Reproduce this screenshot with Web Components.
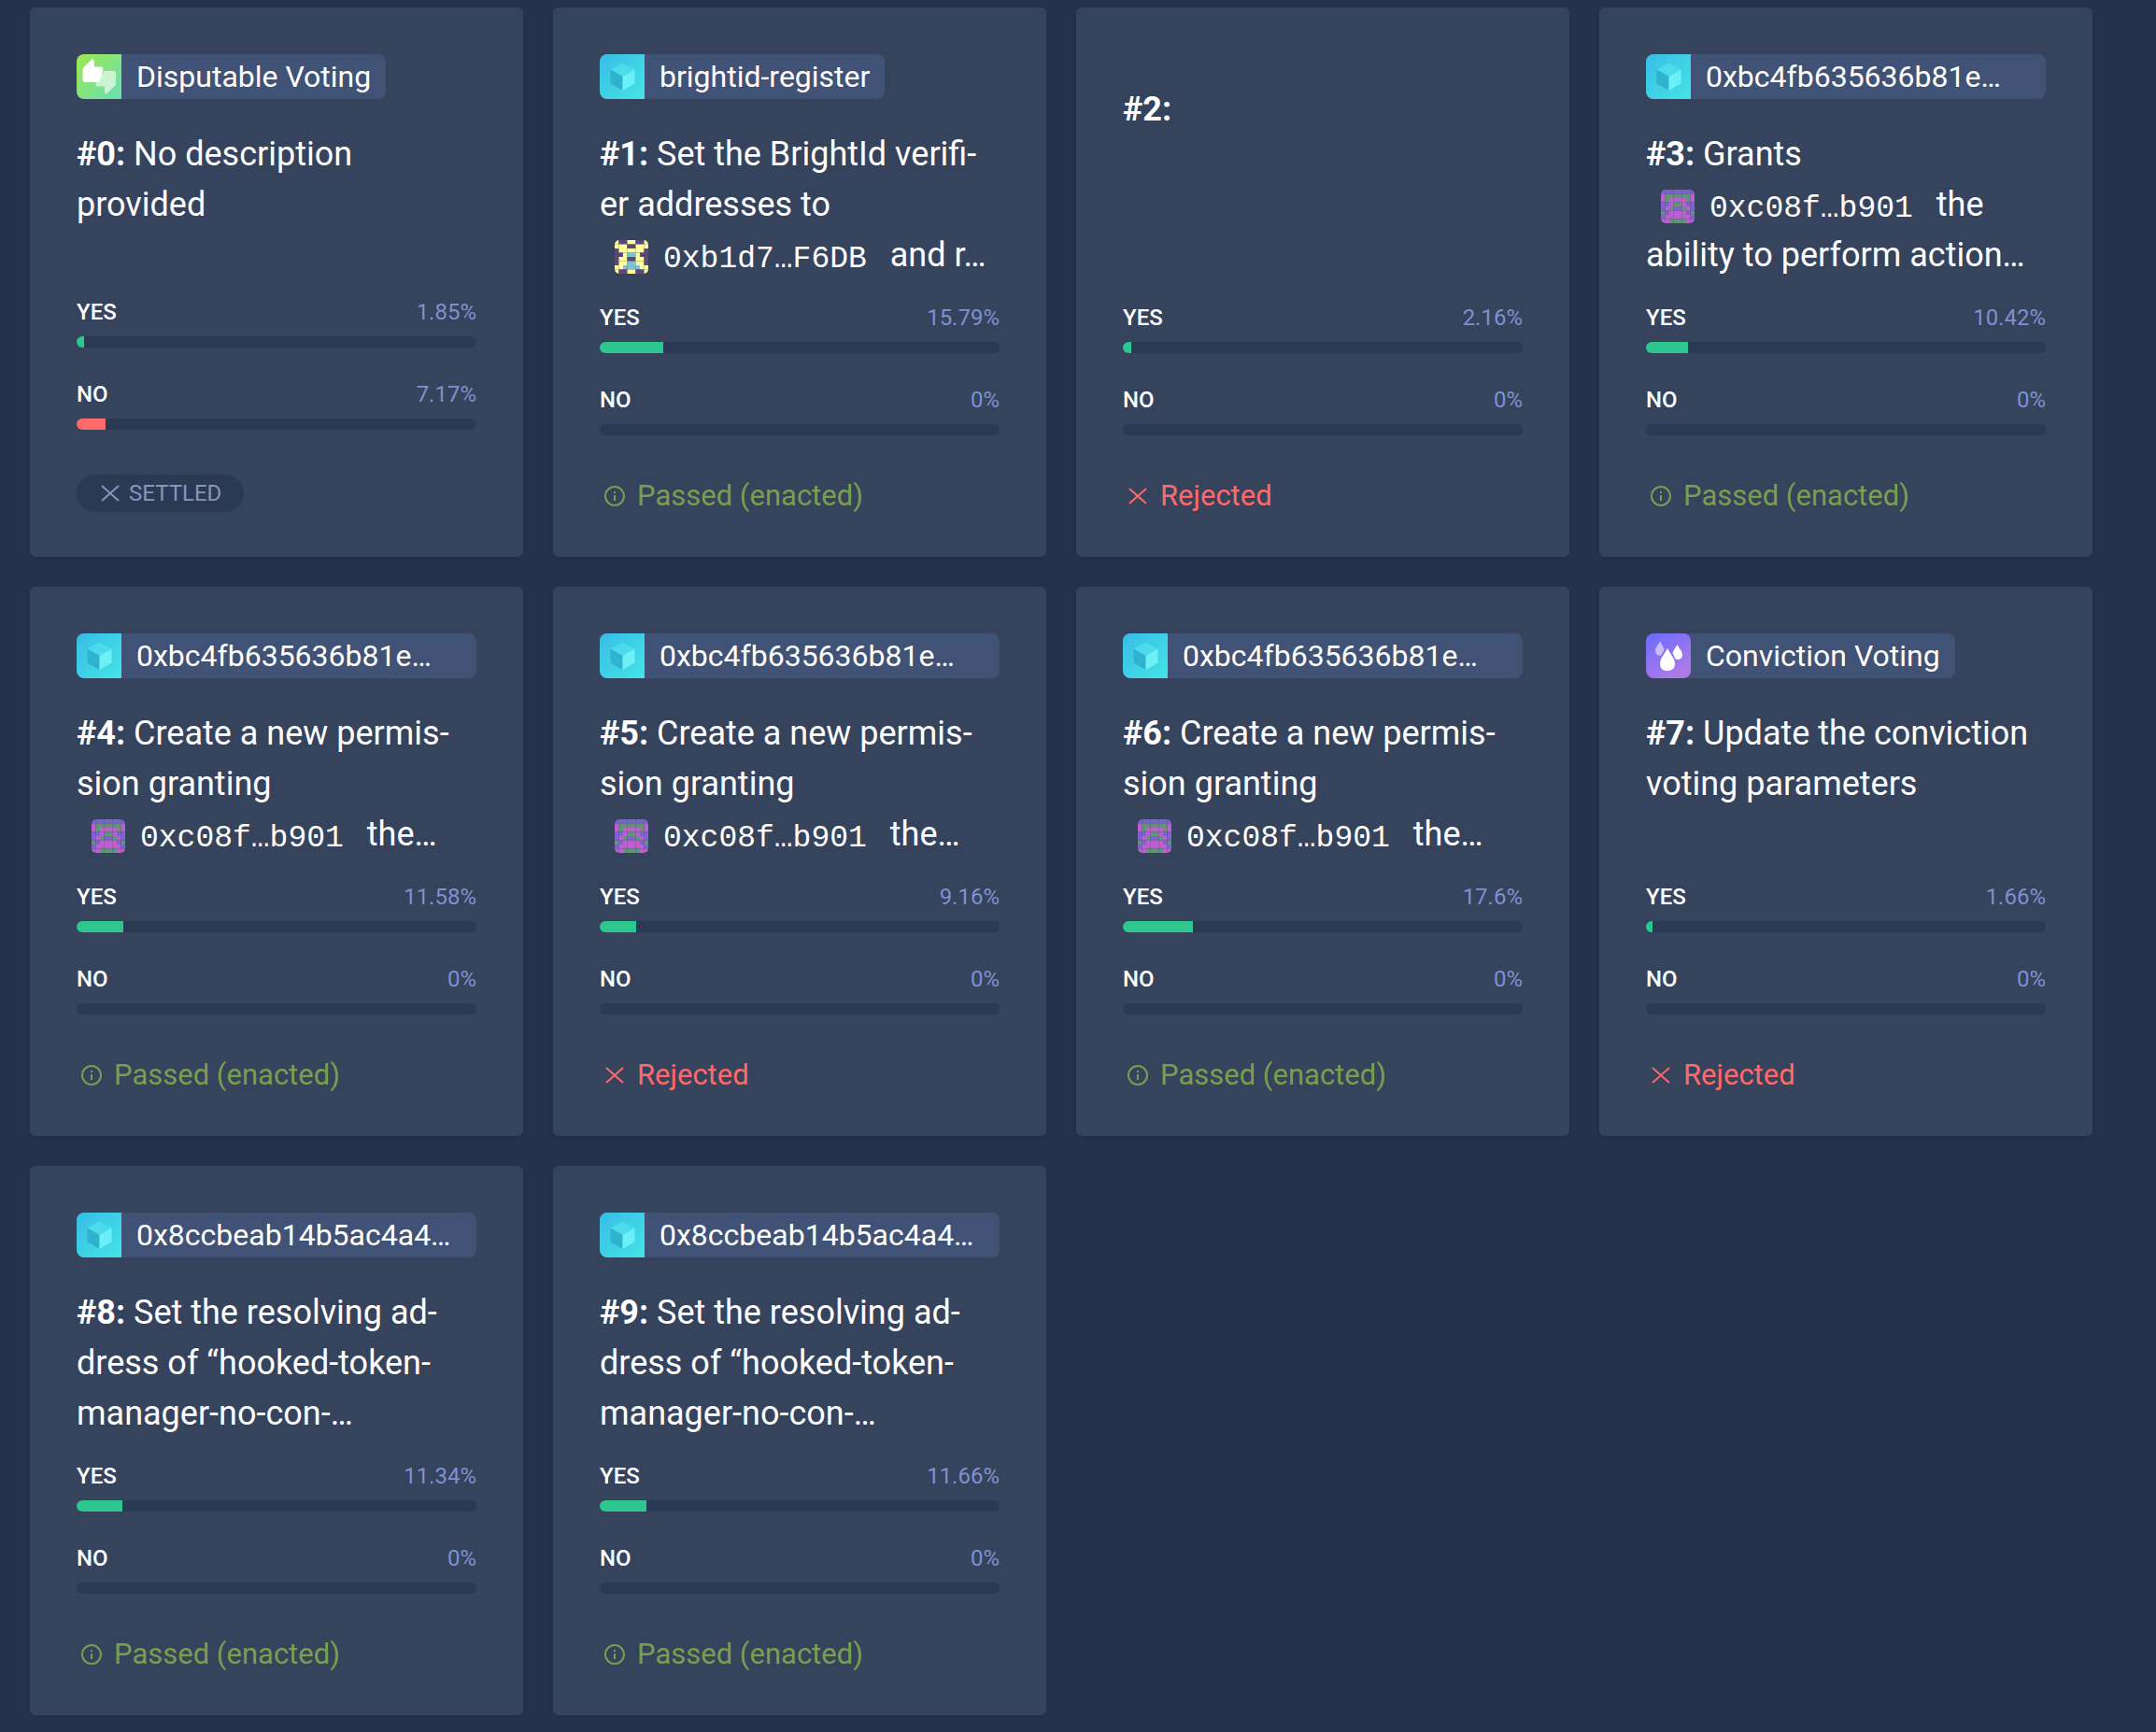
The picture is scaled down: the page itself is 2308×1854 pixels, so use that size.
<!DOCTYPE html>
<html lang="en">
<head>
    <meta charset="utf-8">
    <title>Votes</title>
    <style>
        body {
            margin: 0;
            background: #26324c;
            color: #fff;
            font-family: Roboto, 'Liberation Sans', sans-serif;
        }
    </style>
</head>
<body>
    <vote-grid>
        <vote-card yes="1.85" no="7.17" status="settled">
            <app-badge slot="app" icon="voting">Disputable Voting</app-badge>
            <b>#0:</b> No description<br>provided
        </vote-card>
        <vote-card yes="15.79" no="0" status="passed">
            <app-badge slot="app" icon="cube">brightid-register</app-badge>
            <b>#1:</b> Set the BrightId verifi-<br>er addresses to<br>
            <address-badge icon="yellow">0xb1d7…F6DB</address-badge> and r…
        </vote-card>
        <vote-card yes="2.16" no="0" status="rejected">
            <b>#2:</b>
        </vote-card>
        <vote-card yes="10.42" no="0" status="passed">
            <app-badge slot="app" icon="cube" wide>0xbc4fb635636b81e…</app-badge>
            <b>#3:</b> Grants<br>
            <address-badge icon="violet">0xc08f…b901</address-badge> the<br>ability to perform action…
        </vote-card>
        <vote-card yes="11.58" no="0" status="passed">
            <app-badge slot="app" icon="cube" wide>0xbc4fb635636b81e…</app-badge>
            <b>#4:</b> Create a new permis-<br>sion granting<br>
            <address-badge icon="violet">0xc08f…b901</address-badge> the…
        </vote-card>
        <vote-card yes="9.16" no="0" status="rejected">
            <app-badge slot="app" icon="cube" wide>0xbc4fb635636b81e…</app-badge>
            <b>#5:</b> Create a new permis-<br>sion granting<br>
            <address-badge icon="violet">0xc08f…b901</address-badge> the…
        </vote-card>
        <vote-card yes="17.6" no="0" status="passed">
            <app-badge slot="app" icon="cube" wide>0xbc4fb635636b81e…</app-badge>
            <b>#6:</b> Create a new permis-<br>sion granting<br>
            <address-badge icon="violet">0xc08f…b901</address-badge> the…
        </vote-card>
        <vote-card yes="1.66" no="0" status="rejected">
            <app-badge slot="app" icon="drops">Conviction Voting</app-badge>
            <b>#7:</b> Update the conviction<br>voting parameters
        </vote-card>
        <vote-card yes="11.34" no="0" status="passed">
            <app-badge slot="app" icon="cube" wide>0x8ccbeab14b5ac4a4…</app-badge>
            <b>#8:</b> Set the resolving ad-<br>dress of “hooked-token-<br>manager-no-con-…
        </vote-card>
        <vote-card yes="11.66" no="0" status="passed">
            <app-badge slot="app" icon="cube" wide>0x8ccbeab14b5ac4a4…</app-badge>
            <b>#9:</b> Set the resolving ad-<br>dress of “hooked-token-<br>manager-no-con-…
        </vote-card>
    </vote-grid>

    <script>
        const appIcons = {
            voting: `
                <linearGradient id="bg" x1="0" y1="0" x2="1" y2="1">
                    <stop offset="0" stop-color="#9fe84f"/><stop offset="1" stop-color="#68dfb4"/>
                </linearGradient>
                <rect width="48" height="48" fill="url(#bg)"/>
                <path d="M29 18H39Q42 18 42 21V31Q42 33 40.500 34.500L31.500 43L30 41V34.500H22.500Q19.500 34.500 20.500 31.500L23 28Z" fill="#fff" fill-opacity=".6"/>
                <path d="M17 5L19 7.500V13.500H26Q29 13.500 28.300 16.500L25 27.500Q24 30 21.500 30H9.500Q6.500 30 6.500 27V16.500Q6.500 15 7.700 13.800Z" fill="#fff"/>`,
            cube: `
                <linearGradient id="bg" x1="0" y1="0" x2="1" y2="1">
                    <stop offset="0" stop-color="#38bce6"/><stop offset="1" stop-color="#45e4e6"/>
                </linearGradient>
                <rect width="48" height="48" fill="url(#bg)"/>
                <path d="M24.500 9.500L37.500 16.500L24.500 24L11.500 16.500Z" fill="#4cdbea"/>
                <path d="M11.500 16.500L24.500 24V39L11.500 31.500Z" fill="#2fb2cd"/>
                <path d="M37.500 16.500L24.500 24V39L37.500 31.500Z" fill="#6cf0f6"/>`,
            drops: `
                <linearGradient id="bg" x1="0" y1="0" x2=".6" y2="1">
                    <stop offset="0" stop-color="#6a6bff"/><stop offset="1" stop-color="#ad7ae6"/>
                </linearGradient>
                <rect width="48" height="48" rx="8" fill="url(#bg)"/>
                <path d="M15 8.500C17 12 19.500 15 19.500 18L15.500 24Q10 23.500 10 18.500C10 15 13 12 15 8.500Z" fill="#fff" fill-opacity=".55"/>
                <path d="M33.500 12C35.500 16 39 19 39 23Q39 28 33.500 28Q32 28 31.500 27L28.500 21C29.500 18 32 15 33.500 12Z" fill="#fff"/>
                <path d="M23 16C26 22 31 27 31 32Q31 40 23 40Q15 40 15 32C15 27 20 22 23 16Z" fill="#fff"/>`
        };

        // left half of each 8x8 pattern, the right half mirrors it
        const identicons = {
            yellow: {
                colors: { Y: '#ffff9e', P: '#5f4675', B: '#7cc5d0' },
                rows: ['YPPY', 'YYYP', 'PYYY', 'PPYB', 'PYYP', 'PYYB', 'YYBB', 'YPPY']
            },
            violet: {
                colors: { V: '#7d62d0', G: '#629277', M: '#bd60cf' },
                rows: ['VVVV', 'MGGG', 'MGMM', 'VVMG', 'VMGV', 'GVMM', 'VMMM', 'MMGG']
            }
        };

        const crossPath = 'M7 8L25 24M25 8L7 24';

        const statuses = {
            passed: {
                label: 'Passed (enacted)',
                icon: '<circle cx="16" cy="16" r="10"/><path d="M16 15V21M16 11V13"/>'
            },
            rejected: { label: 'Rejected', icon: `<path d="${crossPath}"/>` },
            settled: { label: 'SETTLED', icon: `<path d="${crossPath}"/>` }
        };

        class VoteGrid extends HTMLElement {
            constructor() {
                super();
                this.attachShadow({ mode: 'open' });
            }

            connectedCallback() {
                this.shadowRoot.innerHTML = `
                    <style>
                        :host {
                            display: grid;
                            grid-template-columns: repeat(4, minmax(0, 1fr));
                            gap: 32px;
                            padding: 8px 68px 16px 32px;
                        }
                    </style>
                    <slot></slot>
                `;
            }
        }

        class AppBadge extends HTMLElement {
            constructor() {
                super();
                this.attachShadow({ mode: 'open' });
            }

            connectedCallback() {
                this.shadowRoot.innerHTML = `
                    <style>
                        :host {
                            display: flex;
                            width: fit-content;
                            max-width: 100%;
                            height: 48px;
                            border-radius: 8px;
                            overflow: hidden;
                            background: #415277;
                            font-size: 32px;
                            line-height: 48px;
                        }

                        :host([wide]) {
                            width: 100%;
                        }

                        svg {
                            flex: none;
                            width: 48px;
                            height: 48px;
                        }

                        .label {
                            padding: 0 16px;
                            overflow: hidden;
                            white-space: nowrap;
                            text-overflow: ellipsis;
                        }
                    </style>
                    <svg viewBox="0 0 48 48" aria-hidden="true">${appIcons[this.getAttribute('icon')]}</svg>
                    <span class="label"><slot></slot></span>
                `;
            }
        }

        class AddressBadge extends HTMLElement {
            constructor() {
                super();
                this.attachShadow({ mode: 'open' });
            }

            cells() {
                const { colors, rows } = identicons[this.getAttribute('icon')];
                return rows.map((half, y) =>
                    [...half, ...[...half].reverse()].map((key, x) =>
                        `<rect x="${x}" y="${y}" width="1" height="1" fill="${colors[key]}"/>`
                    ).join('')
                ).join('');
            }

            connectedCallback() {
                this.shadowRoot.innerHTML = `
                    <style>
                        :host {
                            display: inline-flex;
                            align-items: center;
                            gap: 16px;
                            height: 36px;
                            padding: 0 16px;
                            vertical-align: middle;
                            font-family: 'Liberation Mono', monospace;
                            font-size: 33px;
                            line-height: 36px;
                        }

                        svg {
                            width: 36px;
                            height: 36px;
                            border-radius: 5px;
                        }

                        .address {
                            padding-top: 6px;
                        }
                    </style>
                    <svg viewBox="0 0 8 8" aria-hidden="true">${this.cells()}</svg>
                    <span class="address"><slot></slot></span>
                `;
            }
        }

        class VoteBar extends HTMLElement {
            constructor() {
                super();
                this.attachShadow({ mode: 'open' });
            }

            connectedCallback() {
                const value = this.getAttribute('value');

                this.shadowRoot.innerHTML = `
                    <style>
                        :host {
                            display: block;
                            font-size: 24px;
                            line-height: 36px;
                        }

                        .row {
                            display: flex;
                            justify-content: space-between;
                            margin-bottom: 8px;
                        }

                        .label {
                            font-weight: 500;
                        }

                        .value {
                            color: #8090cf;
                        }

                        .track {
                            height: 12px;
                            border-radius: 6px;
                            overflow: hidden;
                            background: #2c3955;
                        }

                        .fill {
                            width: ${value}%;
                            height: 100%;
                            background: var(--bar-color);
                        }
                    </style>
                    <div class="row">
                        <span class="label" id="label"><slot></slot></span>
                        <span class="value">${value}%</span>
                    </div>
                    <div class="track" role="progressbar" aria-labelledby="label" aria-valuenow="${value}">
                        <div class="fill"></div>
                    </div>
                `;
            }
        }

        class VoteStatus extends HTMLElement {
            constructor() {
                super();
                this.attachShadow({ mode: 'open' });
            }

            connectedCallback() {
                const { label, icon } = statuses[this.getAttribute('type')];

                this.shadowRoot.innerHTML = `
                    <style>
                        :host {
                            display: flex;
                            align-items: center;
                            gap: 8px;
                            width: fit-content;
                            height: 34px;
                            font-size: 31px;
                            line-height: 34px;
                        }

                        :host([type='passed']) {
                            color: #7a9e50;
                        }

                        :host([type='rejected']) {
                            color: #ff6969;
                        }

                        :host([type='settled']) {
                            gap: 4px;
                            height: 40px;
                            padding: 0 24px 0 20px;
                            border-radius: 20px;
                            background: #2c3955;
                            color: #8595bb;
                            font-size: 24px;
                            line-height: 42px;
                        }

                        svg {
                            width: 32px;
                            height: 32px;
                            fill: none;
                            stroke: currentColor;
                            stroke-width: 2;
                        }
                    </style>
                    <svg viewBox="0 0 32 32" aria-hidden="true">${icon}</svg>
                    <span>${label}</span>
                `;
            }
        }

        class VoteCard extends HTMLElement {
            constructor() {
                super();
                this.attachShadow({ mode: 'open' });
            }

            connectedCallback() {
                this.shadowRoot.innerHTML = `
                    <style>
                        :host {
                            display: flex;
                            flex-direction: column;
                            box-sizing: border-box;
                            min-height: 588px;
                            padding: 50px 50px 48px;
                            border-radius: 6px;
                            background: #36435d;
                            box-shadow: 0 2px 4px rgba(0, 0, 0, 0.1);
                        }

                        .title {
                            flex: 1;
                            margin: 32px 0 16px;
                            font-size: 36px;
                            font-weight: 400;
                            line-height: 54px;
                        }

                        ::slotted(b) {
                            font-weight: 700;
                        }

                        .votes {
                            display: flex;
                            flex-direction: column;
                            gap: 32px;
                            margin-bottom: 48px;
                        }

                        .yes {
                            --bar-color: #2cc68f;
                        }

                        .no {
                            --bar-color: #ff6969;
                        }
                    </style>
                    <slot name="app"></slot>
                    <h2 class="title"><slot></slot></h2>
                    <div class="votes">
                        <vote-bar class="yes" value="${this.getAttribute('yes')}">YES</vote-bar>
                        <vote-bar class="no" value="${this.getAttribute('no')}">NO</vote-bar>
                    </div>
                    <vote-status type="${this.getAttribute('status')}"></vote-status>
                `;
            }
        }

        customElements.define('vote-grid', VoteGrid);
        customElements.define('app-badge', AppBadge);
        customElements.define('address-badge', AddressBadge);
        customElements.define('vote-bar', VoteBar);
        customElements.define('vote-status', VoteStatus);
        customElements.define('vote-card', VoteCard);
    </script>
</body>
</html>
